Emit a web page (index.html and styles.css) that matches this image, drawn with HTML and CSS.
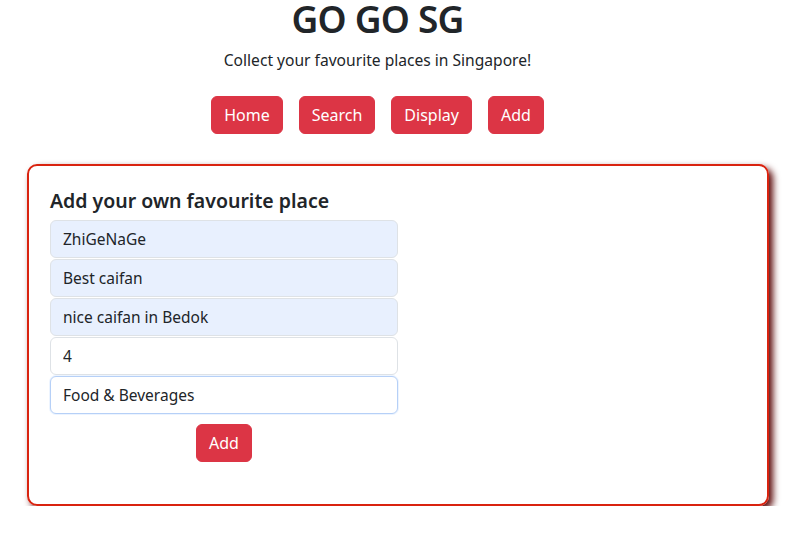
FILE: index.html
```html
<!DOCTYPE html>
<html>
<head>
<meta charset="utf-8">
<link rel="stylesheet" href="styles.css">
</head>
<body>
<header class="header">
  <h1 class="title">GO GO SG</h1>
  <p class="subtitle">Collect your favourite places in Singapore!</p>
  <nav class="nav">
    <button class="btn">Home</button>
    <button class="btn">Search</button>
    <button class="btn">Display</button>
    <button class="btn">Add</button>
  </nav>
</header>
<main class="card">
  <h5 class="card-title">Add your own favourite place</h5>
  <form class="form">
    <input class="field autofill" value="ZhiGeNaGe">
    <input class="field autofill" value="Best caifan">
    <input class="field autofill" value="nice caifan in Bedok">
    <input class="field" value="4">
    <input class="field focus" value="Food &amp; Beverages">
    <div class="actions"><button type="button" class="btn">Add</button></div>
  </form>
</main>
</body>
</html>
```
FILE: styles.css
```css
* { box-sizing: border-box; }
body {
  margin: 0;
  font-family: "Noto Sans", "Open Sans", sans-serif;
  color: #212529;
  background: #fff;
  font-size: 16px;
}
.header {
  width: 755px;
  text-align: center;
}
.title {
  margin: 0;
  font-size: 37px;
  font-weight: 600;
  letter-spacing: -0.8px;
  line-height: 38px;
}
.subtitle {
  margin: 10px 0 0;
  font-size: 15.6px;
  line-height: 24px;
}
.nav {
  display: flex;
  justify-content: center;
  gap: 16px;
  margin-top: 24px;
}
.btn {
  font-family: inherit;
  font-size: 16px;
  line-height: 24px;
  padding: 6px 12px;
  height: 38px;
  border: 1px solid #dc3545;
  background: #dc3545;
  color: #fff;
  border-radius: 6px;
}
.card {
  margin: 30px 0 0 27px;
  width: 742px;
  height: 342px;
  border: 2px solid #d9230f;
  border-radius: 10px;
  box-shadow: 4px 4px 7px #5c0a0a;
  padding: 20px 21px;
}
.card-title {
  margin: 0 0 4px;
  font-size: 19.5px;
  font-weight: 600;
  line-height: 30px;
}
.form { width: 348px; }
.field {
  display: block;
  width: 100%;
  height: 38px;
  margin-bottom: 1px;
  padding: 6px 12px;
  font-family: inherit;
  font-size: 15.5px;
  color: #212529;
  border: 1px solid #dee2e6;
  border-radius: 6px;
  background: #fff;
  outline: none;
}
.autofill { background: #e8f0fe; }
.focus {
  border-color: #b6d0f7;
  box-shadow: 0 0 0 1px rgba(13, 110, 253, 0.08);
}
.actions {
  display: flex;
  justify-content: center;
  margin-top: 10px;
}
```
